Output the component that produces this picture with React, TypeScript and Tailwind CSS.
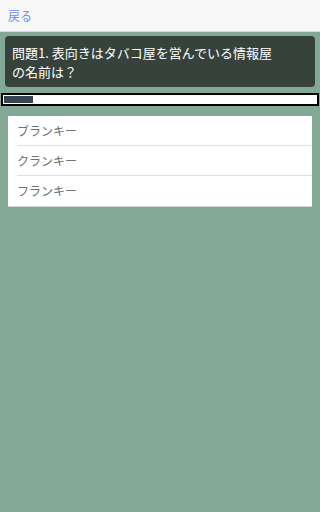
import React from "react"

const CHOICES = ["ブランキー", "クランキー", "フランキー"]

export default function App() {
  return (
    <div
      className="min-h-[512px] w-full overflow-hidden bg-[#83a996]"
      style={{ fontFamily: '"Noto Sans CJK JP", "Noto Sans", sans-serif' }}
    >
      {/* Header */}
      <div className="flex h-[32px] items-center border-b border-[#d9d9d9] bg-[#f8f8f8] px-2">
        <a className="text-[12px] leading-none text-[#6b8ef7]">戻る</a>
      </div>

      <div className="min-w-[300px]">
        {/* Question */}
        <div className="mx-[5px] mt-[4px] rounded-[4px] bg-[#36423b] px-[7px] pb-[6px] pt-[7px] text-[13px] leading-[19px] text-white">
          <p className="max-w-[271px]">問題1. 表向きはタバコ屋を営んでいる情報屋の名前は？</p>
        </div>

        {/* Progress */}
        <div className="mx-px mt-[6px] h-[13px] border-2 border-black bg-white p-px">
          <div className="h-full w-[29px] bg-[#36454f]" />
        </div>

        {/* Choices */}
        <ul className="mx-[8px] mt-[10px] bg-white pl-[9px] shadow-[0_1px_0_#c9d6cf]">
          {CHOICES.map((c, i) => (
            <li
              key={c}
              className={`flex h-[30px] items-center text-[12px] text-[#707070] ${
                i < CHOICES.length - 1 ? "border-b border-[#dedede]" : ""
              }`}
            >
              {c}
            </li>
          ))}
        </ul>
      </div>
    </div>
  )
}
